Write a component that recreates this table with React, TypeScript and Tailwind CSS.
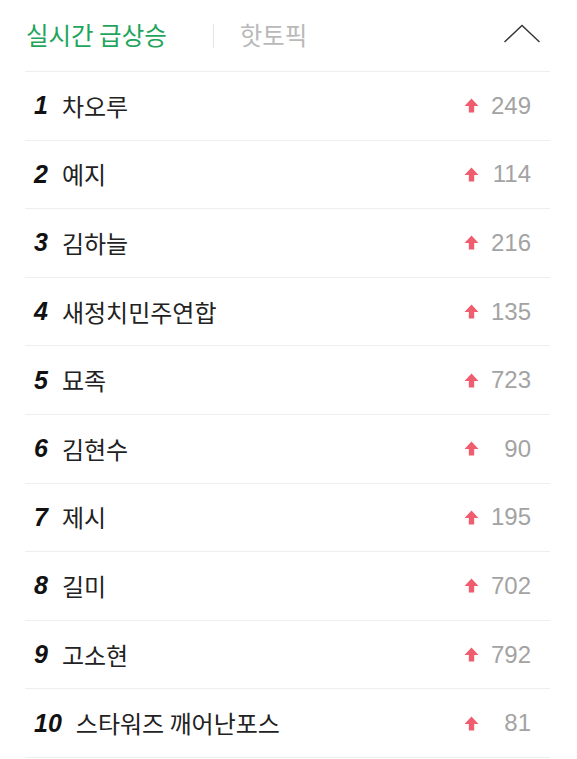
const items = [
  { rank: 1, name: "차오루", count: 249 },
  { rank: 2, name: "예지", count: 114 },
  { rank: 3, name: "김하늘", count: 216 },
  { rank: 4, name: "새정치민주연합", count: 135 },
  { rank: 5, name: "묘족", count: 723 },
  { rank: 6, name: "김현수", count: 90 },
  { rank: 7, name: "제시", count: 195 },
  { rank: 8, name: "길미", count: 702 },
  { rank: 9, name: "고소현", count: 792 },
  { rank: 10, name: "스타워즈 깨어난포스", count: 81 },
];

function UpArrow() {
  return (
    <svg width="15" height="15" viewBox="0 0 14 14" className="shrink-0">
      <path d="M7 0.5 L13.5 7.5 L9.5 7.5 L9.5 13.5 L4.5 13.5 L4.5 7.5 L0.5 7.5 Z" fill="#ef5d6f" />
    </svg>
  );
}

export default function App() {
  return (
    <div
      className="w-[577px] h-[759px] bg-white overflow-hidden"
      style={{ fontFamily: '"Noto Sans CJK KR", "Noto Sans", sans-serif' }}
    >
      {/* header tabs */}
      <div className="h-[71px] flex items-center pl-[26px] pr-[36px]">
        <span className="text-[24.5px] text-[#1fa55c]">실시간 급상승</span>
        <span className="w-px h-[24px] bg-[#e3e3e3] ml-[46px] mr-[26px]" />
        <span className="text-[24.5px] text-[#b9b9b9]">핫토픽</span>
        <svg width="38" height="20" viewBox="0 0 38 20" className="ml-auto mt-[-4px]">
          <path d="M1.5 18 L19 1.5 L36.5 18" fill="none" stroke="#333" strokeWidth="1.4" />
        </svg>
      </div>

      <ul className="ml-[25px] mr-[27px] border-b border-[#eeeeee]">
        {items.map((it) => (
          <li
            key={it.rank}
            className="h-[68.6px] border-t border-[#eeeeee] flex items-center pl-[9px] pr-[19px]"
          >
            <span
              className="text-[25px] font-bold italic text-[#111] shrink-0 leading-none"
              style={{ fontFamily: '"Liberation Sans", Arial, sans-serif' }}
            >
              {it.rank}
            </span>
            <span className="ml-[14px] text-[24px] text-[#222] leading-none">
              {it.name}
            </span>
            <span className="ml-auto flex items-center">
              <UpArrow />
              <span
                className="w-[52px] text-right text-[24px] text-[#a3a3a3] leading-none"
                style={{ fontFamily: '"Liberation Sans", Arial, sans-serif' }}
              >
                {it.count}
              </span>
            </span>
          </li>
        ))}
      </ul>
    </div>
  );
}
